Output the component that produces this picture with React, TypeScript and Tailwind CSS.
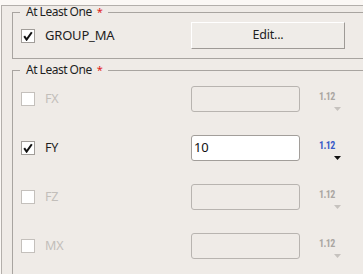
import React from "react";

function Check({ checked, disabled }: { checked?: boolean; disabled?: boolean }) {
  return (
    <div
      className={
        "w-[14px] h-[14px] shrink-0 bg-white border flex items-center justify-center " +
        (disabled ? "border-[#c4c0bc]" : "border-[#a19d99]")
      }
    >
      {checked && (
        <svg width="10" height="10" viewBox="0 0 10 10">
          <path d="M1.2 5.2 L3.6 8.6 L8.8 1.2" fill="none" stroke="#111" strokeWidth="2" strokeLinejoin="miter" />
        </svg>
      )}
    </div>
  );
}

function Unit({ enabled }: { enabled?: boolean }) {
  return (
    <div className="flex flex-col w-[22px] ml-[19px] mt-[4px]">
      <span
        className={
          "text-[10px] leading-[10px] font-bold tracking-[-0.6px] " +
          (enabled ? "text-[#3a5bc7]" : "text-[#aaa6a2]")
        }
        style={{ fontFamily: "'Liberation Sans Narrow', 'Roboto Condensed', 'Noto Sans', sans-serif" }}
      >
        1.12
      </span>
      <svg className="ml-[15px] mt-[5px]" width="7" height="4" viewBox="0 0 7 4">
        <path d="M0 0 L7 0 L3.5 4 Z" fill={enabled ? "#111" : "#c6c2be"} />
      </svg>
    </div>
  );
}

function Row({ label, value, enabled }: { label: string; value?: string; enabled?: boolean }) {
  return (
    <div className="flex items-center h-[26px]">
      <div className="w-[170px] flex items-center">
        <Check checked={enabled} disabled={!enabled} />
        <span className={"ml-[10px] " + (enabled ? "text-[#1e1e1e]" : "text-[#c2beba]")}>{label}</span>
      </div>
      <div
        className={
          "w-[109px] h-[26px] rounded-[3px] border flex items-center px-[2px] " +
          (enabled ? "bg-white border-[#a29e9a]" : "border-[#b8b4b0]")
        }
      >
        {value && <span className="text-[#111] text-[13px]">{value}</span>}
      </div>
      <Unit enabled={enabled} />
    </div>
  );
}

export default function App() {
  return (
    <div
      className="w-[363px] h-[274px] overflow-hidden bg-[#fbf8f5] pt-[5px] pl-[1px] text-[12.5px] tracking-[-0.2px] text-[#1e1e1e]"
      style={{ fontFamily: "'Noto Sans', 'Open Sans', sans-serif" }}
    >
      <div className="h-full border-l border-t border-[#b3afab] bg-[#efebe7] pl-[10px]">
        <fieldset className="mt-[-2px] border border-[#a8a4a0] px-[7px] pb-[9px] mr-[-40px]">
          <legend className="ml-0 px-[6px] leading-[16px] text-[12px] tracking-[-0.5px]">
            At Least One<span className="ml-[5px] text-[#e02020] text-[11px]">*</span>
          </legend>
          <div className="pt-[2px] flex items-center h-[29px] pl-[1px]">
            <div className="w-[170px] flex items-center">
              <Check checked />
              <span className="ml-[10px] text-[13px]">GROUP_MA</span>
            </div>
            <button className="w-[154px] h-[27px] bg-[#efece8] border-t border-l border-t-white border-l-white border-b border-r border-b-[#9e9a96] border-r-[#9e9a96] text-[#1e1e1e]">
              Edit...
            </button>
          </div>
        </fieldset>
        <fieldset className="mt-[3px] border border-[#a8a4a0] px-[7px] pb-[20px] mr-[-40px]">
          <legend className="ml-0 px-[6px] leading-[16px] text-[12px] tracking-[-0.5px]">
            At Least One<span className="ml-[5px] text-[#e02020] text-[11px]">*</span>
          </legend>
          <div className="pt-[8px] pl-[1px] flex flex-col gap-[23px]">
            <Row label="FX" />
            <Row label="FY" value="10" enabled />
            <Row label="FZ" />
            <Row label="MX" />
          </div>
        </fieldset>
      </div>
    </div>
  );
}
